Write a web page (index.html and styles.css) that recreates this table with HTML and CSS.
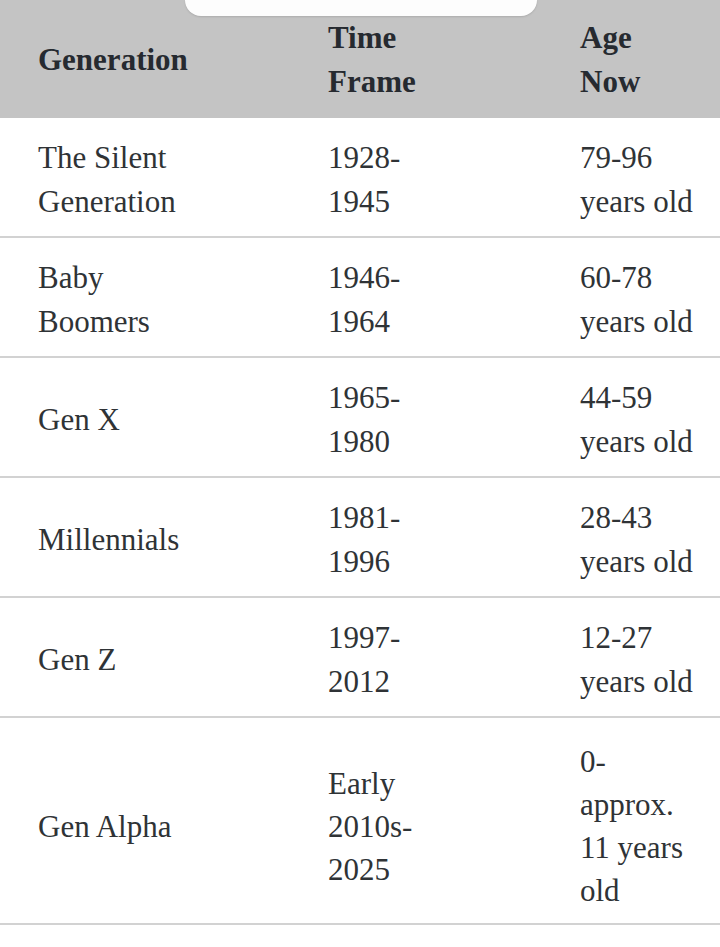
FILE: index.html
```html
<!DOCTYPE html>
<html lang="en">
<head>
<meta charset="utf-8">
<title>Generations</title>
<link rel="stylesheet" href="styles.css">
</head>
<body>
<div class="page">
  <div class="pill"></div>
  <div class="table">
    <div class="row head">
      <div class="cell">Generation</div>
      <div class="cell">Time<br>Frame</div>
      <div class="cell">Age<br>Now</div>
    </div>
    <div class="row">
      <div class="cell">The Silent<br>Generation</div>
      <div class="cell">1928-<br>1945</div>
      <div class="cell">79-96<br>years old</div>
    </div>
    <div class="row">
      <div class="cell">Baby<br>Boomers</div>
      <div class="cell">1946-<br>1964</div>
      <div class="cell">60-78<br>years old</div>
    </div>
    <div class="row">
      <div class="cell">Gen X</div>
      <div class="cell">1965-<br>1980</div>
      <div class="cell">44-59<br>years old</div>
    </div>
    <div class="row">
      <div class="cell">Millennials</div>
      <div class="cell">1981-<br>1996</div>
      <div class="cell">28-43<br>years old</div>
    </div>
    <div class="row">
      <div class="cell">Gen Z</div>
      <div class="cell">1997-<br>2012</div>
      <div class="cell">12-27<br>years old</div>
    </div>
    <div class="row tall">
      <div class="cell">Gen Alpha</div>
      <div class="cell">Early<br>2010s-<br>2025</div>
      <div class="cell">0-<br>approx.<br>11 years<br>old</div>
    </div>
  </div>
</div>
</body>
</html>
```

FILE: styles.css
```css
html, body {
  margin: 0;
  padding: 0;
  background: #ffffff;
}

.page {
  position: relative;
  width: 720px;
  min-height: 947px;
  background: #ffffff;
  font-family: "Liberation Serif", "Times New Roman", serif;
  color: #2f3336;
}

.pill {
  position: absolute;
  top: 0;
  left: 185px;
  width: 352px;
  height: 16px;
  background: #fdfdfd;
  border-radius: 0 0 24px 24px;
  box-shadow: 0 1px 2px rgba(0, 0, 0, 0.12);
}

.table {
  display: flex;
  flex-direction: column;
}

.row {
  display: grid;
  grid-template-columns: 290px 252px 1fr;
  align-items: center;
  padding: 18px 0 12px 38px;
  min-height: 88px;
  border-bottom: 2px solid #d2d2d2;
  font-size: 31px;
  line-height: 44px;
}

.row.head {
  background: #c4c4c4;
  border-bottom: none;
  font-weight: bold;
  color: #262a30;
  font-size: 31px;
  padding-top: 16px;
  padding-bottom: 14px;
}

.row.tall {
  padding-top: 22px;
  padding-bottom: 11px;
  line-height: 43px;
}

.cell {
  white-space: nowrap;
}
```
